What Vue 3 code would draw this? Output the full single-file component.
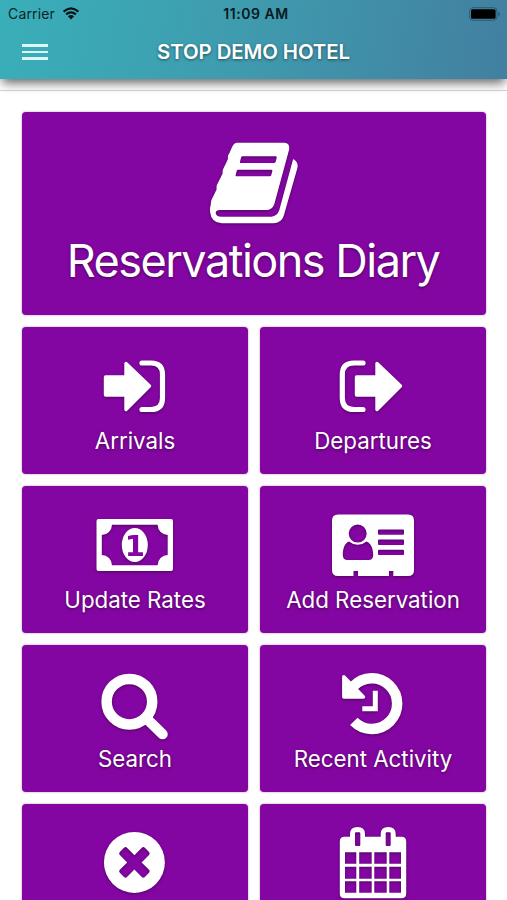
<template>
  <div class="screen">
    <header class="topbar">
      <div class="status">
        <div class="carrier">
          <span>Carrier</span>
          <svg class="wifi" viewBox="0 0 18 13">
            <path d="M1.6 4.6 Q9 -1.8 16.4 4.6" />
            <path d="M4.1 7.4 Q9 3.2 13.9 7.4" />
            <path class="dot" d="M5.9 9.3 Q9 6.8 12.1 9.3 L9 12.4Z" />
          </svg>
        </div>
        <span class="clock">11:09 AM</span>
        <svg class="battery" viewBox="0 0 32 14">
          <rect class="case" x=".6" y=".7" width="27.4" height="12.6" rx="3.4" />
          <rect x="2" y="2.2" width="24.6" height="9.6" rx="1.6" />
          <path class="cap" d="M29.3 4.7 Q33 7 29.3 9.3Z" />
        </svg>
      </div>
      <div class="nav">
        <button class="menu" aria-label="Menu"><i></i><i></i><i></i></button>
        <h1>STOP DEMO HOTEL</h1>
      </div>
    </header>
    <div class="strip"></div>

    <main class="grid">
      <button
        v-for="item in tiles"
        :key="item.icon"
        class="tile"
        :class="{ wide: item.wide }"
      >
        <svg class="icon" :viewBox="item.wide ? '42 30 300 270' : '0 0 100 90'">
          <path
            v-if="item.icon === 'book'"
            fill-rule="evenodd"
            d="M140 38H284Q301 40 297 60L253 222Q247 240 228 240H90Q78 240 77 248Q78 260 94 260H244Q262 258 268 240L308 92Q309 86 313 89Q326 98 322 115L281 258Q274 279 250 280H95Q64 278 60 245Q59 236 62 226Q62 212 66 206Q74 192 80 178Q78 166 84 158Q92 144 98 130Q97 120 102 112Q108 100 114 86Q112 76 118 70L126 52Q130 40 140 38ZM158 79H257Q261 79 260 83L257 95Q256 99 252 99H153Q149 99 150 95L153 83Q154 79 158 79ZM145 119H244Q248 119 247 123L244 135Q243 139 239 139H140Q136 139 137 135L140 123Q141 119 145 119Z"
          />
          <template v-if="item.icon === 'in'">
            <path class="join" d="M20.5 30H41V16.5L64.5 39L41 62.5V48H20.5Z" />
            <path class="bracket" d="M57 16H66Q77.5 16 77.5 27.5V51Q77.5 62.5 66 62.5H57" />
          </template>
          <template v-if="item.icon === 'out'">
            <path class="join" d="M33.5 30H54V16.5L77.5 39L54 62.5V48H33.5Z" />
            <path class="bracket" d="M40 16H31Q19.3 16 19.3 27.5V51Q19.3 62.5 31 62.5H40" />
          </template>
          <template v-if="item.icon === 'money'">
            <path
              fill-rule="evenodd"
              d="M13.5 13H86Q88 13 88 15V63Q88 65 86 65H13.5Q11.5 65 11.5 63V15Q11.5 13 13.5 13ZM27 18.8A10.4 10.4 0 0 1 16.8 29V49A10.4 10.4 0 0 1 27 59.3H72.6A10.4 10.4 0 0 1 82.7 49V29A10.4 10.4 0 0 1 72.6 18.8Z"
            />
            <ellipse cx="49.8" cy="39" rx="13" ry="17" />
            <text x="49.8" y="49.5" text-anchor="middle">1</text>
          </template>
          <path
            v-if="item.icon === 'card'"
            fill-rule="evenodd"
            d="M15 8.5H85Q91 8.5 91 14.5V64Q91 70 85 70H70.3V65H66V70H35V65H30.5V70H15Q9 70 9 64V14.5Q9 8.5 15 8.5ZM34.7 18.6A9 9 0 0 0 34.7 36.6A9 9 0 0 0 34.7 18.6ZM26 35.5C21.5 37 19.8 43 19.8 49Q19.8 54 24.5 54H45.5Q50.2 54 50.2 49C50.2 43 48 37 43.5 35.5Q39.5 38.8 34.7 38.8Q30 38.8 26 35.5ZM56 23.5H80Q81 23.5 81 24.5V27.8Q81 28.8 80 28.8H56Q55 28.8 55 27.8V24.5Q55 23.5 56 23.5ZM56 33.6H80Q81 33.6 81 34.6V37.9Q81 38.9 80 38.9H56Q55 38.9 55 37.9V34.6Q55 33.6 56 33.6ZM56 43.8H80Q81 43.8 81 44.8V48.1Q81 49.1 80 49.1H56Q55 49.1 55 48.1V44.8Q55 43.8 56 43.8Z"
          />
          <template v-if="item.icon === 'search'">
            <circle class="ring" cx="44.4" cy="36.7" r="22.8" />
            <path class="handle" d="M61 53L77.6 69.2" />
          </template>
          <template v-if="item.icon === 'history'">
            <path class="ring" d="M30.8 56.3A25.3 25.3 0 1 0 30.5 21.2" />
            <path class="join" d="M20.8 11.8V32H40.5Z" />
            <path class="hands" d="M52.3 25.8V43.8H39.3" />
          </template>
          <path
            v-if="item.icon === 'close'"
            fill-rule="evenodd"
            d="M49.4 7.9A30.5 30.5 0 0 1 49.4 68.9A30.5 30.5 0 0 1 49.4 7.9ZM49.4 31.2L42 23.8Q40.5 22.4 39 23.8L34.8 28Q33.4 29.5 34.8 31L42.2 38.4L34.8 45.8Q33.4 47.3 34.8 48.8L39 53Q40.5 54.4 42 53L49.4 45.6L56.8 53Q58.3 54.4 59.8 53L64 48.8Q65.4 47.3 64 45.8L56.6 38.4L64 31Q65.4 29.5 64 28L59.8 23.8Q58.3 22.4 56.8 23.8Z"
          />
          <path
            v-if="item.icon === 'calendar'"
            fill-rule="evenodd"
            d="M21.5 12.8H27V10Q27 3 34.5 3Q42 3 42 10V12.8H57.7V10Q57.7 3 65.2 3Q72.7 3 72.7 10V12.8H78.5Q83.2 12.8 83.2 17.5V69.5Q83.2 74.3 78.5 74.3H21.5Q16.8 74.3 16.8 69.5V17.5Q16.8 12.8 21.5 12.8ZM33 8.3H36.3Q37.3 8.3 37.3 9.3V21Q37.3 22 36.3 22H33Q32 22 32 21V9.3Q32 8.3 33 8.3ZM63.7 8.3H66.7Q67.7 8.3 67.7 9.3V21Q67.7 22 66.7 22H63.7Q62.7 22 62.7 21V9.3Q62.7 8.3 63.7 8.3ZM22 28.3H33.3V39.8H22ZM36.2 28.3H48.7V39.8H36.2ZM51.3 28.3H63.7V39.8H51.3ZM66.3 28.3H78V39.8H66.3ZM22 42.7H33.3V54.8H22ZM36.2 42.7H48.7V54.8H36.2ZM51.3 42.7H63.7V54.8H51.3ZM66.3 42.7H78V54.8H66.3ZM22 57.3H33.3V68.8H22ZM36.2 57.3H48.7V68.8H36.2ZM51.3 57.3H63.7V68.8H51.3ZM66.3 57.3H78V68.8H66.3Z"
          />
        </svg>
        <span class="label">{{ item.label }}</span>
      </button>
    </main>
  </div>
</template>

<script setup>
const tiles = [
  { icon: 'book', label: 'Reservations Diary', wide: true },
  { icon: 'in', label: 'Arrivals' },
  { icon: 'out', label: 'Departures' },
  { icon: 'money', label: 'Update Rates' },
  { icon: 'card', label: 'Add Reservation' },
  { icon: 'search', label: 'Search' },
  { icon: 'history', label: 'Recent Activity' },
  { icon: 'close', label: '' },
  { icon: 'calendar', label: '' },
];
</script>

<style>
body {
  margin: 0;
  overflow: hidden;
}
</style>

<style scoped>
.screen {
  width: 507px;
  height: 900px;
  overflow: hidden;
  background: #fff;
  font-family: Inter, "Liberation Sans", sans-serif;
}

.topbar {
  position: relative;
  height: 79px;
  background: linear-gradient(100deg, #39afb9 0%, #3f9bae 48%, #427fa0 100%);
  box-shadow: 0 6px 10px -2px rgba(0, 0, 0, 0.6);
}

.status {
  display: grid;
  grid-template-columns: 1fr auto 1fr;
  align-items: center;
  height: 27px;
  padding: 0 6px 0 8px;
  color: #0b2529;
}

.carrier {
  display: flex;
  align-items: center;
  gap: 7px;
  font-size: 14px;
  letter-spacing: 0.15px;
}

.wifi {
  width: 18px;
  height: 13px;
  fill: none;
  stroke: #071719;
  stroke-width: 2.2;
}

.wifi .dot {
  fill: #071719;
  stroke: none;
}

.clock {
  margin-left: 3px;
  font-size: 14px;
  font-weight: 600;
  letter-spacing: 0.55px;
  color: #08191d;
}

.battery {
  justify-self: end;
  width: 32px;
  height: 14px;
}

.battery .case {
  fill: none;
  stroke: #2b5d70;
  stroke-width: 1;
}

.battery .cap {
  fill: #2b5d70;
}

.nav {
  display: grid;
  grid-template-columns: 80px 1fr 80px;
  align-items: center;
  height: 50px;
}

.menu {
  display: flex;
  flex-direction: column;
  gap: 4px;
  width: 26px;
  margin-left: 22px;
  padding: 0;
  border: 0;
  background: none;
}

.menu i {
  height: 2.6px;
  background: #dcf6fa;
}

h1 {
  margin: 0 0 2px;
  color: #fff;
  font-size: 20.4px;
  font-weight: 600;
  letter-spacing: -0.1px;
  text-align: center;
  white-space: nowrap;
  text-shadow: 0 1px 3px rgba(0, 0, 0, 0.5);
}

.strip {
  height: 11px;
  border-bottom: 1px solid #d5d5d5;
}

.grid {
  display: grid;
  grid-template-columns: 226px 226px;
  grid-template-rows: 203.4px;
  grid-auto-rows: 146.8px;
  gap: 12px;
  padding: 21px 21px 0 22px;
}

.tile {
  display: flex;
  flex-direction: column;
  align-items: center;
  padding: 20px 0 0;
  border: 0;
  border-radius: 4px;
  background: #8406a2;
  box-shadow: 0 0 2px rgba(90, 0, 110, 0.5);
  color: #fff;
  font-family: inherit;
}

.tile.wide {
  grid-column: 1 / 3;
  padding-top: 28px;
}

.icon {
  flex: none;
  width: 100px;
  height: 90px;
  overflow: visible;
  fill: #fff;
  filter: drop-shadow(0 1px 1.5px rgba(0, 0, 0, 0.4));
}

.icon .join {
  stroke: #fff;
  stroke-width: 3.4;
  stroke-linejoin: round;
}

.icon .bracket {
  fill: none;
  stroke: #fff;
  stroke-width: 5.2;
  stroke-linecap: round;
}

.icon .ring {
  fill: none;
  stroke: #fff;
  stroke-width: 10.5;
}

.icon .handle {
  stroke: #fff;
  stroke-width: 10.3;
  stroke-linecap: round;
}

.icon .hands {
  fill: none;
  stroke: #fff;
  stroke-width: 5;
}

.icon text {
  fill: #8406a2;
  font-family: "DejaVu Sans", sans-serif;
  font-size: 29px;
  font-weight: 700;
}

.label {
  height: 28px;
  margin-top: -10px;
  font-size: 22.3px;
  line-height: 28px;
  white-space: nowrap;
  text-shadow: 0 1px 3px rgba(0, 0, 0, 0.5);
}

.wide .label {
  height: 56px;
  margin: 3px 2px 0 0;
  font-size: 45px;
  font-weight: 400;
  line-height: 56px;
  letter-spacing: -1.5px;
}
</style>
